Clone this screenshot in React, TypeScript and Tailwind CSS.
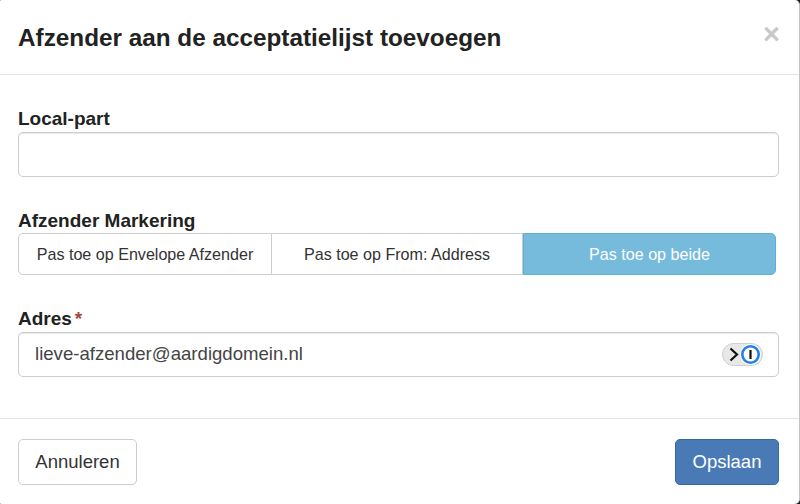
const segments = ['Pas toe op Envelope Afzender', 'Pas toe op From: Address', 'Pas toe op beide'];

function KeyPill() {
  return (
    <div className="flex h-[23px] w-[41px] items-center justify-between rounded-full border border-[#cfcfcf] bg-[#e8e8e8] pl-[6px] pr-[1px]">
      <svg width="10" height="15" viewBox="0 0 10 15" fill="none" stroke="#111" strokeWidth="2.2">
        <path d="M1.5 1.5 L8 7.5 L1.5 13.5" />
      </svg>
      <svg width="21" height="21" viewBox="0 0 21 21">
        <circle cx="10.5" cy="10.5" r="10.5" fill="#fff" />
        <circle cx="10.5" cy="10.5" r="8.2" fill="none" stroke="#2380ea" strokeWidth="2.6" />
        <rect x="9.4" y="6" width="2.2" height="9" fill="#111" />
      </svg>
    </div>
  );
}

export default function App() {
  return (
    <div className="h-[504px] w-[800px] overflow-hidden bg-[#14141c] font-['Liberation_Sans',Arial,sans-serif] text-[#333]">
      <div className="flex h-full w-full flex-col rounded-l-[1px] rounded-r-[5px] border-r border-[#c4c4c4] bg-white">
        {/* Header */}
        <div className="flex h-[75px] items-center justify-between border-b border-[#e5e5e5] pl-[18px] pr-[19px]">
          <h4 className="mt-[3px] text-[24.3px] leading-none font-bold text-[#222]">Afzender aan de acceptatielijst toevoegen</h4>
          <span className="mb-[6px] text-[29px] leading-none font-bold text-[#c8c8c8]">×</span>
        </div>

        {/* Form */}
        <div className="flex flex-1 flex-col pt-[34px] pl-[18px] pr-[20px]">
          <label className="mb-[4px] block text-[19px] leading-[19px] font-bold text-[#222]">Local-part</label>
          <div className="h-[45px] rounded-[5px] border border-[#ccc] shadow-[inset_0_1px_1px_rgba(0,0,0,0.08)]" />

          <label className="mt-[34px] mb-[3px] block text-[19px] leading-[19px] font-bold text-[#222]">Afzender Markering</label>
          <div className="flex h-[42px] w-[758px] text-[16.1px]">
            {segments.map((s, i) => (
              <div
                key={s}
                className={
                  i === 0
                    ? 'flex w-[254px] items-center justify-center rounded-l-[5px] border border-[#ccc] text-[#333]'
                    : i === 1
                      ? 'flex w-[251px] items-center justify-center border-y border-r border-[#ccc] text-[#333]'
                      : 'flex flex-1 items-center justify-center rounded-r-[5px] border border-[#5cb0d6] bg-[#76bbdb] text-white'
                }
              >
                {s}
              </div>
            ))}
          </div>

          <label className="mt-[34px] mb-[4px] block text-[19px] leading-[19px] font-bold text-[#222]">
            Adres<span className="ml-[3px] text-[#a94442]">*</span>
          </label>
          <div className="flex h-[45px] items-center justify-between rounded-[5px] border border-[#ccc] pl-[16px] pr-[15px] text-[18.6px] text-[#444] shadow-[inset_0_1px_1px_rgba(0,0,0,0.08)]">
            <span className="mb-[1px]">lieve-afzender@aardigdomein.nl</span>
            <KeyPill />
          </div>
        </div>

        {/* Footer */}
        <div className="flex h-[86px] items-start justify-between border-t border-[#e5e5e5] pt-[20px] pl-[18px] pr-[20px] text-[18.5px]">
          <button className="h-[46px] w-[119px] rounded-[5px] border border-[#ccc] bg-white text-[#333]">Annuleren</button>
          <button className="h-[46px] w-[104px] rounded-[5px] border border-[#2e6da4] bg-[#4a7ab5] text-white">Opslaan</button>
        </div>
      </div>
    </div>
  );
}
